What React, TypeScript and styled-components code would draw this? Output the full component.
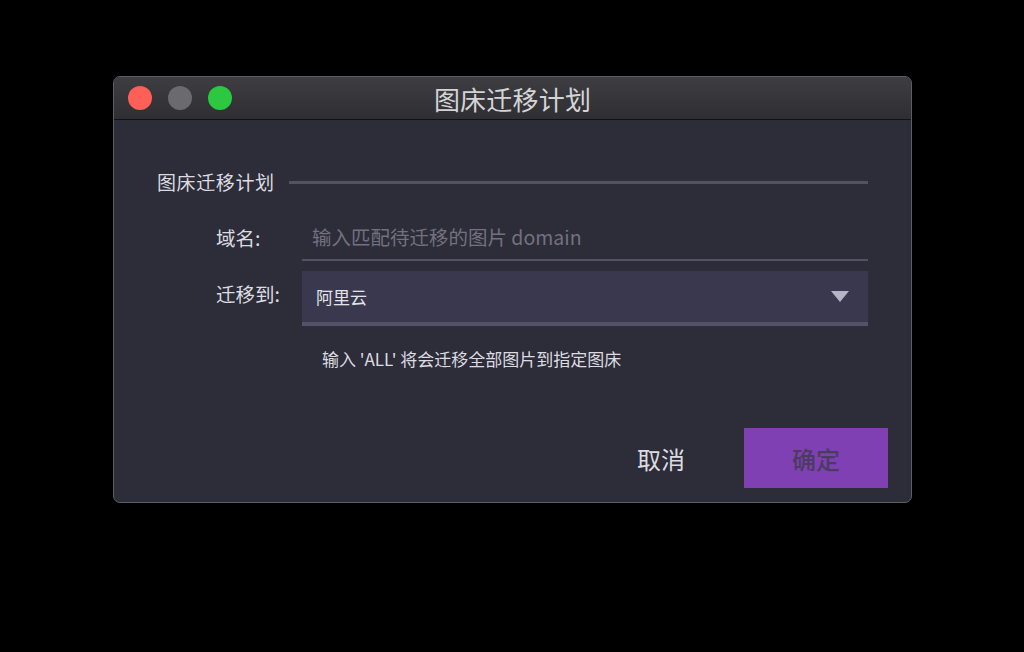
import * as React from "react";
import styled, { createGlobalStyle } from "styled-components";

const GlobalStyle = createGlobalStyle`
  html, body {
    margin: 0;
    padding: 0;
    background: #000;
    font-family: "Noto Sans CJK SC", "Noto Sans", sans-serif;
  }
`;

const Page = styled.div`
  width: 1024px;
  height: 652px;
  padding: 76px 0 0 113px;
  box-sizing: border-box;
`;

const Window = styled.div`
  width: 799px;
  height: 427px;
  box-sizing: border-box;
  border: 1px solid #5c5c62;
  border-radius: 7px;
  overflow: hidden;
  background: #2d2c39;
  display: flex;
  flex-direction: column;
`;

const TitleBar = styled.div`
  height: 42px;
  flex: none;
  position: relative;
  display: flex;
  align-items: center;
  justify-content: center;
  background: linear-gradient(#3e3e42, #2f2f33);
  border-bottom: 1px solid #111114;
`;

const Lights = styled.div`
  position: absolute;
  left: 14px;
  top: 9px;
  display: flex;
  gap: 16px;
`;

const Light = styled.span<{ $color: string }>`
  width: 24px;
  height: 24px;
  border-radius: 50%;
  background: ${(p) => p.$color};
`;

const Title = styled.div`
  color: #d4d4d6;
  font-size: 26px;
  letter-spacing: 0.2px;
`;

const Body = styled.div`
  flex: 1;
  padding: 51px 43px 0 43px;
  display: flex;
  flex-direction: column;
`;

const Legend = styled.div`
  display: flex;
  align-items: center;
  gap: 14px;
  color: #dcdce0;
  font-size: 19px;
  letter-spacing: 0.6px;
  line-height: 22px;
  &::after {
    content: "";
    flex: 1;
    height: 3px;
    background: #53525f;
  }
`;

const Form = styled.div`
  margin-top: 21px;
  display: grid;
  grid-template-columns: 86px 1fr;
  padding-left: 59px;
`;

const Label = styled.div`
  color: #dcdce0;
  font-size: 19.5px;
  display: flex;
  align-items: center;
`;

const Input = styled.div`
  height: 47px;
  box-sizing: border-box;
  border-bottom: 2px solid #545262;
  display: flex;
  align-items: center;
  padding-left: 10px;
  color: #73717f;
  font-size: 19.5px;
`;

const Select = styled.div`
  margin-top: 10px;
  height: 55px;
  box-sizing: border-box;
  background: #3a384e;
  border-bottom: 4px solid #54526a;
  display: flex;
  align-items: center;
  justify-content: space-between;
  padding: 0 19px 0 14px;
  color: #e4e4e8;
  font-size: 17px;
`;

const Hint = styled.div`
  grid-column: 2;
  margin-top: 20px;
  padding-left: 20px;
  color: #dcdce0;
  font-size: 17px;
`;

const Footer = styled.div`
  margin-top: auto;
  margin-right: -20px;
  margin-bottom: 14px;
  display: flex;
  justify-content: flex-end;
  align-items: center;
  gap: 59px;
`;

const TextButton = styled.button`
  border: none;
  background: none;
  color: #dcdce0;
  font-family: inherit;
  font-size: 24px;
  padding: 0;
`;

const PrimaryButton = styled.button`
  width: 144px;
  height: 60px;
  border: none;
  background: #7f40b3;
  color: #4a3c5f;
  font-family: inherit;
  font-size: 24px;
  font-weight: 500;
`;

const Caret = () => (
  <svg width="18" height="11" viewBox="0 0 18 11">
    <path d="M0 0 H18 L9 11 Z" fill="#b5b3c6" />
  </svg>
);

export default function App() {
  return (
    <Page>
      <GlobalStyle />
      <Window>
        <TitleBar>
          <Lights>
            <Light $color="#fe5f57" />
            <Light $color="#6a6a6f" />
            <Light $color="#2bc840" />
          </Lights>
          <Title>图床迁移计划</Title>
        </TitleBar>
        <Body>
          <Legend>图床迁移计划</Legend>
          <Form>
            <Label>域名:</Label>
            <Input>输入匹配待迁移的图片 domain</Input>
            <Label>迁移到:</Label>
            <Select>
              <span>阿里云</span>
              <Caret />
            </Select>
            <Hint>输入 'ALL' 将会迁移全部图片到指定图床</Hint>
          </Form>
          <Footer>
            <TextButton>取消</TextButton>
            <PrimaryButton>确定</PrimaryButton>
          </Footer>
        </Body>
      </Window>
    </Page>
  );
}
